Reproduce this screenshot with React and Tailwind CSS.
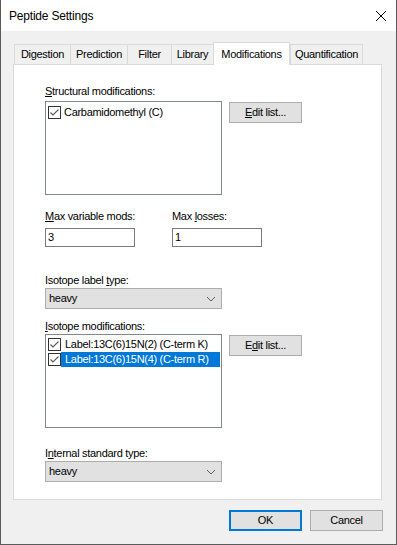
import React from 'react';

const font = { fontFamily: '"Liberation Sans", Arial, sans-serif' };

const tabs = [
  { name: 'Digestion', w: 'w-[56px]' },
  { name: 'Prediction', w: 'w-[57px]' },
  { name: 'Filter', w: 'w-[44px]' },
  { name: 'Library', w: 'w-[42px]' },
  { name: 'Modifications', w: 'w-[77px]', active: true },
  { name: 'Quantification', w: 'w-[73px]', last: true },
];

const Check = () => (
  <span className="w-[13px] h-[13px] shrink-0 border border-[#333333] bg-white flex items-center justify-center">
    <svg width="11" height="11" viewBox="0 0 11 11">
      <path d="M1.5 5.5 L4 8 L9.5 2.5" fill="none" stroke="#5a5a5a" strokeWidth="1.1" />
    </svg>
  </span>
);

const Button = ({ children, primary }) => (
  <button
    className={`w-[73px] h-[21px] bg-[#e1e1e1] text-[11px] tracking-[-0.3px] text-black flex items-center justify-center ${
      primary ? 'border-2 border-[#0078d7]' : 'border border-[#adadad]'
    }`}
  >
    {children}
  </button>
);

const Select = ({ value }) => (
  <div className="w-[177px] h-[21px] bg-[#e1e1e1] border border-[#adadad] flex items-center justify-between pl-[3px] pr-[5px]">
    <span>{value}</span>
    <svg width="10" height="6" viewBox="0 0 10 6">
      <path d="M1 1 L5 5 L9 1" fill="none" stroke="#606060" strokeWidth="1" />
    </svg>
  </div>
);

export default function App() {
  return (
    <div
      className="w-[397px] h-[545px] bg-[#f0f0f0] border-x border-b border-[#5b5b5b] flex flex-col text-[11px] tracking-[-0.3px] text-black"
      style={font}
    >
      {/* Title bar */}
      <div className="h-[31px] bg-white flex items-center justify-between pl-[8px] pr-[9px] shrink-0">
        <span className="text-[12px] tracking-[-0.2px]">Peptide Settings</span>
        <svg width="12" height="12" viewBox="0 0 12 12">
          <path d="M1 1 L11 11 M11 1 L1 11" stroke="#000" strokeWidth="1" />
        </svg>
      </div>

      {/* Tabs + page */}
      <div className="pl-[12px] pt-[11px]">
        <div className="flex items-end h-[22px] pl-[1px]">
          {tabs.map((t) =>
            t.active ? (
              <div
                key={t.name}
                className={`${t.w} h-[23px] -mb-[1px] relative z-10 bg-white border-x border-t border-[#d9d9d9] flex items-start justify-center pt-[3px]`}
              >
                {t.name}
              </div>
            ) : (
              <div
                key={t.name}
                className={`${t.w} h-[20px] bg-[#f0f0f0] border-t border-l border-[#d9d9d9] ${
                  t.last ? 'border-r' : ''
                } flex items-center justify-center`}
              >
                {t.name}
              </div>
            )
          )}
        </div>

        <div className="w-[369px] h-[436px] bg-white border border-[#d9d9d9] pl-[31px] pt-[20px]">
          {/* Structural modifications */}
          <div className="h-[13px] leading-[13px] mb-[3px]">
            <u>S</u>tructural modifications:
          </div>
          <div className="flex items-start gap-[7px]">
            <div className="w-[177px] h-[94px] border border-[#828790] pt-[3px] pl-[2px]">
              <div className="flex items-center h-[14px] gap-[3px]">
                <Check />
                <span>Carbamidomethyl (C)</span>
              </div>
            </div>
            <div className="mt-[1px]">
              <Button>
                <u>E</u>dit list...
              </Button>
            </div>
          </div>

          {/* Max fields */}
          <div className="flex mt-[15px]">
            <div className="w-[127px]">
              <div className="h-[13px] leading-[13px] mb-[5px]">
                <u>M</u>ax variable mods:
              </div>
              <div className="w-[90px] h-[19px] border border-[#7a7a7a] flex items-center pl-[2px]">3</div>
            </div>
            <div>
              <div className="h-[13px] leading-[13px] mb-[5px]">
                Max <u>l</u>osses:
              </div>
              <div className="w-[90px] h-[19px] border border-[#7a7a7a] flex items-center pl-[2px]">1</div>
            </div>
          </div>

          {/* Isotope label type */}
          <div className="h-[13px] leading-[13px] mt-[27px] mb-[1px]">
            Isotope label <u>t</u>ype:
          </div>
          <Select value="heavy" />

          {/* Isotope modifications */}
          <div className="h-[13px] leading-[13px] mt-[11px] mb-[1px]">
            <u>I</u>sotope modifications:
          </div>
          <div className="flex items-start gap-[7px]">
            <div className="w-[177px] h-[94px] border border-[#828790] pt-[2px] pl-[2px] pr-[1px]">
              <div className="flex items-center h-[15px] gap-[3px]">
                <Check />
                <span className="pl-[1px]">Label:13C(6)15N(2) (C-term K)</span>
              </div>
              <div className="flex items-center h-[15px]">
                <Check />
                <span className="flex-1 h-[15px] bg-[#0078d7] text-white flex items-center pl-[4px]">
                  Label:13C(6)15N(4) (C-term R)
                </span>
              </div>
            </div>
            <div className="mt-[1px]">
              <Button>
                E<u>d</u>it list...
              </Button>
            </div>
          </div>

          {/* Internal standard type */}
          <div className="h-[13px] leading-[13px] mt-[19px] mb-[1px]">
            I<u>n</u>ternal standard type:
          </div>
          <Select value="heavy" />
        </div>
      </div>

      {/* Dialog buttons */}
      <div className="flex justify-end gap-[8px] pr-[13px] mt-[10px]">
        <Button primary>OK</Button>
        <Button>Cancel</Button>
      </div>
    </div>
  );
}
